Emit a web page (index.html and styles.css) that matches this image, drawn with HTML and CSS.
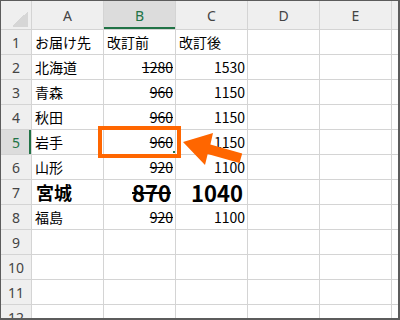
FILE: index.html
```html
<!DOCTYPE html>
<html lang="ja">
<head>
    <meta charset="UTF-8">
    <title>改訂前後</title>
    <link rel="stylesheet" href="styles.css">
</head>
<body>
    <div class="frame">
        <div class="sheet">
            <div class="row head">
                <div class="corner"></div>
                <div>A</div>
                <div class="sel">B</div>
                <div>C</div>
                <div>D</div>
                <div>E</div>
                <div></div>
            </div>
            <div class="row">
                <div class="rh">1</div>
                <div>お届け先</div>
                <div>改訂前</div>
                <div>改訂後</div>
                <div></div><div></div><div></div>
            </div>
            <div class="row">
                <div class="rh">2</div>
                <div>北海道</div>
                <div class="num old">1280</div>
                <div class="num">1530</div>
                <div></div><div></div><div></div>
            </div>
            <div class="row">
                <div class="rh">3</div>
                <div>青森</div>
                <div class="num old">960</div>
                <div class="num">1150</div>
                <div></div><div></div><div></div>
            </div>
            <div class="row">
                <div class="rh">4</div>
                <div>秋田</div>
                <div class="num old">960</div>
                <div class="num">1150</div>
                <div></div><div></div><div></div>
            </div>
            <div class="row">
                <div class="rh sel">5</div>
                <div>岩手</div>
                <div class="num old">960</div>
                <div class="num">1150</div>
                <div></div><div></div><div></div>
            </div>
            <div class="row">
                <div class="rh">6</div>
                <div>山形</div>
                <div class="num old">920</div>
                <div class="num">1100</div>
                <div></div><div></div><div></div>
            </div>
            <div class="row">
                <div class="rh">7</div>
                <div class="big">宮城</div>
                <div class="num old big-num">870</div>
                <div class="num big-num">1040</div>
                <div></div><div></div><div></div>
            </div>
            <div class="row">
                <div class="rh">8</div>
                <div>福島</div>
                <div class="num old">920</div>
                <div class="num">1100</div>
                <div></div><div></div><div></div>
            </div>
            <div class="row">
                <div class="rh">9</div>
                <div></div><div></div><div></div><div></div><div></div><div></div>
            </div>
            <div class="row">
                <div class="rh">10</div>
                <div></div><div></div><div></div><div></div><div></div><div></div>
            </div>
            <div class="row">
                <div class="rh">11</div>
                <div></div><div></div><div></div><div></div><div></div><div></div>
            </div>
            <div class="row">
                <div class="rh">12</div>
                <div></div><div></div><div></div><div></div><div></div><div></div>
            </div>
        </div>

        <!-- active cell B5: fill handle, highlight box and pointer -->
        <div class="handle"></div>
        <div class="mark"></div>
        <svg class="arrow" width="400" height="320" viewBox="0 0 400 320">
            <polygon points="183,142 213,133 210.4,144.5 242.2,153.4 239.5,163 207.7,154.1 205,165" fill="#ff6600"/>
        </svg>
    </div>
</body>
</html>
```

FILE: styles.css
```css
* {
    margin: 0;
    padding: 0;
    box-sizing: border-box;
}

body {
    width: 400px;
    height: 320px;
    overflow: hidden;
    font-family: "Noto Sans CJK JP", sans-serif;
}

.frame {
    position: relative;
    width: 400px;
    height: 320px;
    border: 1px solid #5c5c5c;
    border-right-width: 2px;
    border-bottom-width: 2px;
    background: #fff;
    overflow: hidden;
}

.sheet {
    display: flex;
    flex-direction: column;
    gap: 1px;
    width: max-content;
    background: #d4d4d4;
}

.row {
    display: flex;
    gap: 1px;
    height: 24px;
}

.row > div {
    flex: none;
    width: 71px;
    display: flex;
    align-items: center;
    padding: 0 3px;
    background: #fff;
    color: #000;
    font-size: 14px;
    white-space: nowrap;
}

.row > .rh {
    width: 30px;
    justify-content: center;
    padding: 0;
    background: #efefef;
    color: #444;
    font-family: "Noto Sans", sans-serif;
    font-size: 14px;
}

.head {
    height: 28px;
}

.head > div {
    justify-content: center;
    background: #efefef;
    color: #444;
    font-family: "Noto Sans", sans-serif;
    font-size: 14px;
}

.head > .corner {
    width: 30px;
    padding: 0;
    background: linear-gradient(to bottom right, transparent 50%, #d6d6d6 50%) no-repeat right 3px bottom 2px / 16px 16px, #efefef;
}

.head > .sel {
    background: #dcdcdc;
    color: #217346;
    box-shadow: inset 0 -2px #217346;
}

.row > .rh.sel {
    background: #dcdcdc;
    color: #217346;
    box-shadow: inset -2px 0 #217346;
}

.row > .num {
    justify-content: flex-end;
    padding-right: 2px;
}

.old {
    text-decoration: line-through;
}

.row > .big {
    font-size: 18px;
    font-weight: 700;
    padding-left: 4px;
}

.row > .big-num {
    font-size: 22px;
    font-weight: 700;
    padding-right: 4px;
}

.handle {
    position: absolute;
    left: 172px;
    top: 150px;
    width: 2px;
    height: 2px;
    background: #217346;
}

.mark {
    position: absolute;
    left: 97px;
    top: 125px;
    width: 83px;
    height: 32px;
    border: 4px solid #ff6600;
}

.arrow {
    position: absolute;
    left: -1px;
    top: -1px;
    pointer-events: none;
}
```
